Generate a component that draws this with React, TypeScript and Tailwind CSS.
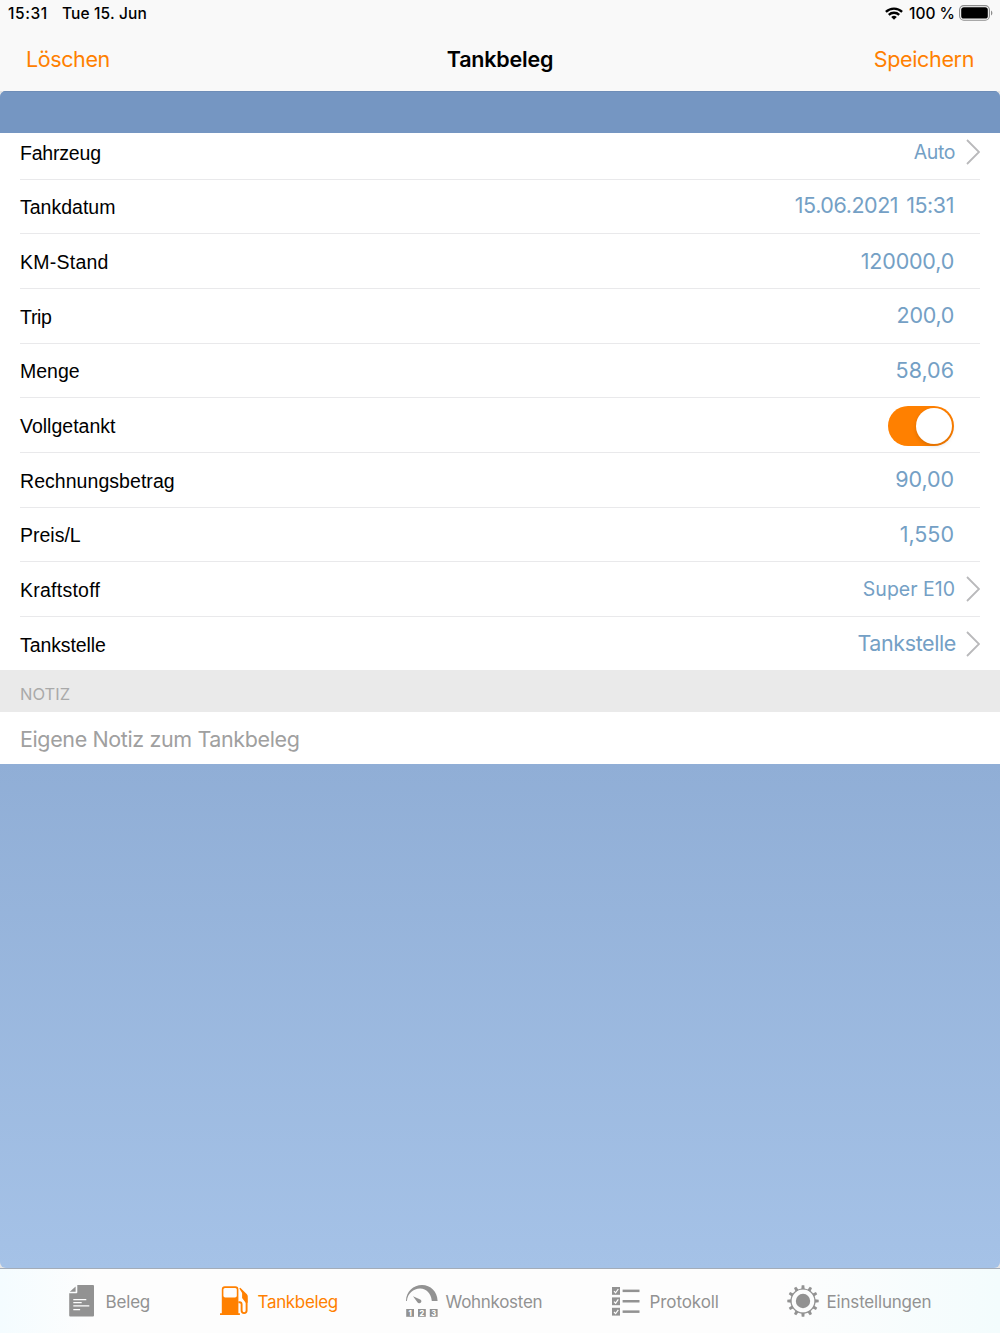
import React from 'react';

interface FieldRow {
  label: string;
  labelClass?: string;
  value?: string;
  valueClass?: string;
  chevron?: boolean;
  toggle?: boolean;
}

interface Tab {
  label: string;
  icon: React.ReactNode;
  className: string;
  textClass: string;
}

const rows: FieldRow[] = [
  { label: 'Fahrzeug', labelClass: 'tracking-[-0.2px]', value: 'Auto', valueClass: 'text-[19.5px] tracking-[-0.4px] pt-px', chevron: true },
  { label: 'Tankdatum', value: '15.06.2021 15:31', valueClass: 'text-[21.5px] tracking-[-0.45px] [word-spacing:2.5px] pb-[2px]' },
  { label: 'KM-Stand', labelClass: 'tracking-[0.25px]', value: '120000,0', valueClass: 'text-[21.5px] tracking-[-0.2px] pt-[0.5px]' },
  { label: 'Trip', labelClass: 'tracking-[-0.3px]', value: '200,0', valueClass: 'text-[21.5px] tracking-[-0.3px] pb-px' },
  { label: 'Menge', value: '58,06', valueClass: 'text-[21.5px] pb-[0.5px]' },
  { label: 'Vollgetankt', toggle: true },
  { label: 'Rechnungsbetrag', labelClass: 'tracking-[0.05px]', value: '90,00', valueClass: 'text-[21.5px] tracking-[-0.1px] pb-px' },
  { label: 'Preis/L', value: '1,550', valueClass: 'text-[21.5px] pt-[0.5px]' },
  { label: 'Kraftstoff', labelClass: 'tracking-[0.25px]', value: 'Super E10', valueClass: 'text-[19.5px] pt-px', chevron: true },
  { label: 'Tankstelle', labelClass: 'tracking-[-0.1px]', value: 'Tankstelle', valueClass: 'text-[21.5px] tracking-[-0.4px] pb-[1.5px] -mr-px', chevron: true },
];

const WifiIcon = () => (
  <svg width="18" height="13" viewBox="0 0 18 13" fill="none" stroke="#000" strokeWidth="2.3">
    <path d="M0.9 4.9a11.6 11.6 0 0 1 16.2 0" />
    <path d="M3.8 7.9a7.4 7.4 0 0 1 10.4 0" />
    <path d="M9 12.8 6.2 10a4 4 0 0 1 5.6 0z" fill="#000" stroke="none" />
  </svg>
);

const BatteryIcon = () => (
  <svg width="34" height="16" viewBox="0 0 34 16">
    <rect x="0.6" y="0.6" width="29.8" height="14.6" rx="4.2" fill="none" stroke="#8d8d8d" strokeWidth="1.1" />
    <rect x="2.2" y="2.2" width="26.6" height="11.4" rx="2.6" fill="#000" />
    <path d="M32 5.4c1.8.8 1.8 4.2 0 5z" fill="#8d8d8d" />
  </svg>
);

const Chevron = () => (
  <svg width="14" height="26" viewBox="0 0 14 26" fill="none" stroke="#b9b9bb" strokeWidth="1.8">
    <path d="M1 1l12 12L1 25" />
  </svg>
);

const ReceiptIcon = () => (
  <svg width="26" height="32" viewBox="0 0 26 32">
    <path d="M8.3 0H24a1 1 0 0 1 1 1v29.6a1 1 0 0 1-1 1H1.2a1 1 0 0 1-1-1V8.3h7.1a1 1 0 0 0 1-1z" fill="#929292" />
    <path d="M6.6 1.6v5.2H0.8z" fill="#929292" />
    <path d="M4.3 14.6h13M4.3 17.7h8.4M4.3 20.8h16M4.3 24.6h6.8" stroke="#fff" strokeWidth="1.2" />
  </svg>
);

const PumpIcon = () => (
  <svg width="28" height="30" viewBox="0 0 28 30">
    <path
      fillRule="evenodd"
      d="M4.8.3h10.6a3 3 0 0 1 3 3v23.9h1.5v1.7H0v-1.7h1.8V3.3a3 3 0 0 1 3-3zM5 1.9a1.6 1.6 0 0 0-1.6 1.6v6.2a1.8 1.8 0 0 0 1.8 1.8h9.8a1.8 1.8 0 0 0 1.8-1.8V3.500a1.600 1.600 0 0 0-1.600-1.600z"
      fill="#ff8000"
    />
    <path d="M18.4 16.2h1.2a2 2 0 0 1 2 2v6.4a2.5 2.5 0 0 0 5 0v-9.8l-.2-5.2" fill="none" stroke="#ff8000" strokeWidth="1.9" />
    <path d="M19.3 2.4l1-.7 6.6 6.5c.5.7.7 1.5.7 2.4v6.1h-1.9l-3.6-4.6V7z" fill="#ff8000" />
  </svg>
);

const GaugeIcon = () => (
  <svg width="32" height="32" viewBox="0 0 32 32">
    <path d="M0 15.9C.1 6.8 7.4.1 16 .1s15.4 6.7 15.6 15.8h-5.8C25 8.4 20.5 3.700 14.200 3.600 7.500 3.500 1.600 8.700.9 15.900z" fill="#929292" />
    <path d="M7 11.3l6.7 2.9a2.1 2.1 0 1 1-2.3 3z" fill="#929292" />
    <g fill="#929292">
      <rect x="0.2" y="24" width="7.8" height="7.8" />
      <rect x="12" y="24" width="7.8" height="7.8" />
      <rect x="23.8" y="24" width="7.8" height="7.8" />
    </g>
    <g fill="#fff" fontSize="7.5" fontWeight="800" fontFamily="Inter, sans-serif" textAnchor="middle">
      <text x="4.1" y="30.6">1</text>
      <text x="15.9" y="30.6">2</text>
      <text x="27.7" y="30.6">3</text>
    </g>
  </svg>
);

const ChecklistIcon = () => (
  <svg width="28" height="29" viewBox="0 0 28 29">
    {[0, 10.4, 20.8].map((y) => (
      <g key={y} transform={`translate(0 ${y})`}>
        <rect x="0" y="0" width="8" height="7.8" fill="#929292" />
        <path d="M2 4.2l1.6 1.6L6.3 2" fill="none" stroke="#fff" strokeWidth="1.2" />
        <rect x="10.6" y="2.6" width="16.9" height="2.5" fill="#929292" />
      </g>
    ))}
  </svg>
);

const GearIcon = () => (
  <svg width="32" height="32" viewBox="0 0 32 32">
    <circle cx="16" cy="16" r="12" fill="none" stroke="#929292" strokeWidth="1.2" />
    <circle cx="16" cy="16" r="7.2" fill="#929292" />
    {Array.from({ length: 12 }, (_, i) => (
      <path key={i} d="M14.3 4.2l.4-3.9h2.6l.4 3.9z" fill="#929292" transform={`rotate(${i * 30} 16 16)`} />
    ))}
  </svg>
);

const tabs: Tab[] = [
  { label: 'Beleg', icon: <ReceiptIcon />, className: 'w-[82px] gap-[11px]', textClass: 'tracking-[-0.2px]' },
  { label: 'Tankbeleg', icon: <PumpIcon />, className: 'w-[117px] gap-[10px] text-[#ff8000]', textClass: 'tracking-[-0.35px]' },
  { label: 'Wohnkosten', icon: <GaugeIcon />, className: 'w-[137px] gap-[8px]', textClass: 'tracking-[-0.3px]' },
  { label: 'Protokoll', icon: <ChecklistIcon />, className: 'w-[106px] gap-[10px]', textClass: 'tracking-[-0.1px]' },
  { label: 'Einstellungen', icon: <GearIcon />, className: 'w-[144px] gap-[8px]', textClass: 'tracking-[-0.2px]' },
];

const Row: React.FC<{ row: FieldRow; first: boolean; last: boolean }> = ({ row, first, last }) => (
  <div className={`mx-5 flex items-center justify-between ${first ? 'h-[46.7px] pb-[7px]' : 'h-[54.65px]'} ${last ? '' : 'border-b border-[#e9e9eb]'}`}>
    <span className={`pt-[3px] font-['Liberation_Sans',Arial,sans-serif] text-[19.5px] text-black ${row.labelClass ?? ''}`}>{row.label}</span>
    <div className={`flex items-center ${row.chevron ? '' : 'pr-[26px]'}`}>
      {row.value && <span className={`text-[#74a0c5] ${row.valueClass}`}>{row.value}</span>}
      {row.toggle && (
        <div className="mt-[2px] flex h-10 w-[66px] items-center justify-end rounded-full bg-[#ff8000] pr-[2px]">
          <div className="size-9 rounded-full bg-white shadow-[0_2px_4px_rgba(0,0,0,0.15)]" />
        </div>
      )}
      {row.chevron && <div className="ml-[11px]"><Chevron /></div>}
    </div>
  </div>
);

const App: React.FC = () => {
  return (
    <div className="flex h-[1333px] w-[1000px] flex-col overflow-hidden bg-[#f9f9f9] font-[Inter,sans-serif]">
      {/* Status bar */}
      <div className="flex h-[26px] items-center justify-between pl-2 pr-[7px] text-[15.5px] font-medium text-black">
        <div className="flex gap-[14px] pt-px">
          <span className="tracking-[0.6px]">15:31</span>
          <span className="tracking-[0.15px]">Tue 15. Jun</span>
        </div>
        <div className="flex items-center">
          <WifiIcon />
          <span className="ml-[6px] mr-1 pt-px">100 %</span>
          <BatteryIcon />
        </div>
      </div>

      {/* Navigation bar */}
      <div className="grid h-[65px] grid-cols-3 items-center px-[26px] pt-px text-[21.5px]">
        <button className="text-left tracking-[-0.4px] text-[#ff8000]">Löschen</button>
        <h1 className="text-center font-semibold tracking-[-0.2px] text-black">Tankbeleg</h1>
        <button className="text-right tracking-[-0.35px] text-[#ff8000]">Speichern</button>
      </div>

      {/* Form */}
      <div className="h-[1177px] bg-[#e4e4e4]">
        <div className="flex h-full flex-col overflow-hidden rounded-[6px] bg-linear-to-b from-[#90aed6] from-57% to-[#a5c2e7]">
          <div className="h-[42px] shrink-0 border-t border-[#6e8db7] bg-[#7596c2]" />
          <div className="h-[537.4px] shrink-0 bg-white">
            {rows.map((row, i) => (
              <Row key={row.label} row={row} first={i === 0} last={i === rows.length - 1} />
            ))}
          </div>
          <div className="flex h-[41.6px] shrink-0 items-center bg-[#eaeaea] px-5 pt-[6px] text-[16.5px] text-[#a9a9a9]">NOTIZ</div>
          <div className="flex h-[52px] shrink-0 items-center bg-white px-5 pt-[2px] text-[21.5px] tracking-[-0.38px] text-[#a0a0a0]">
            Eigene Notiz zum Tankbeleg
          </div>
        </div>
      </div>

      {/* Tab bar */}
      <nav className="flex h-[65px] gap-[69px] border-t border-[#a3acb8] bg-[linear-gradient(to_right,#f4fcff,#fdfdfd_9%,#fdfdfd_78%,#f3fcfd)] pl-[68.6px] text-[17px] text-[#929292]">
        {tabs.map((tab) => (
          <button key={tab.label} className={`flex shrink-0 items-center whitespace-nowrap ${tab.className}`}>
            <span className="shrink-0">{tab.icon}</span>
            <span className={`pt-[4px] ${tab.textClass}`}>{tab.label}</span>
          </button>
        ))}
      </nav>
    </div>
  );
};

export default App;
